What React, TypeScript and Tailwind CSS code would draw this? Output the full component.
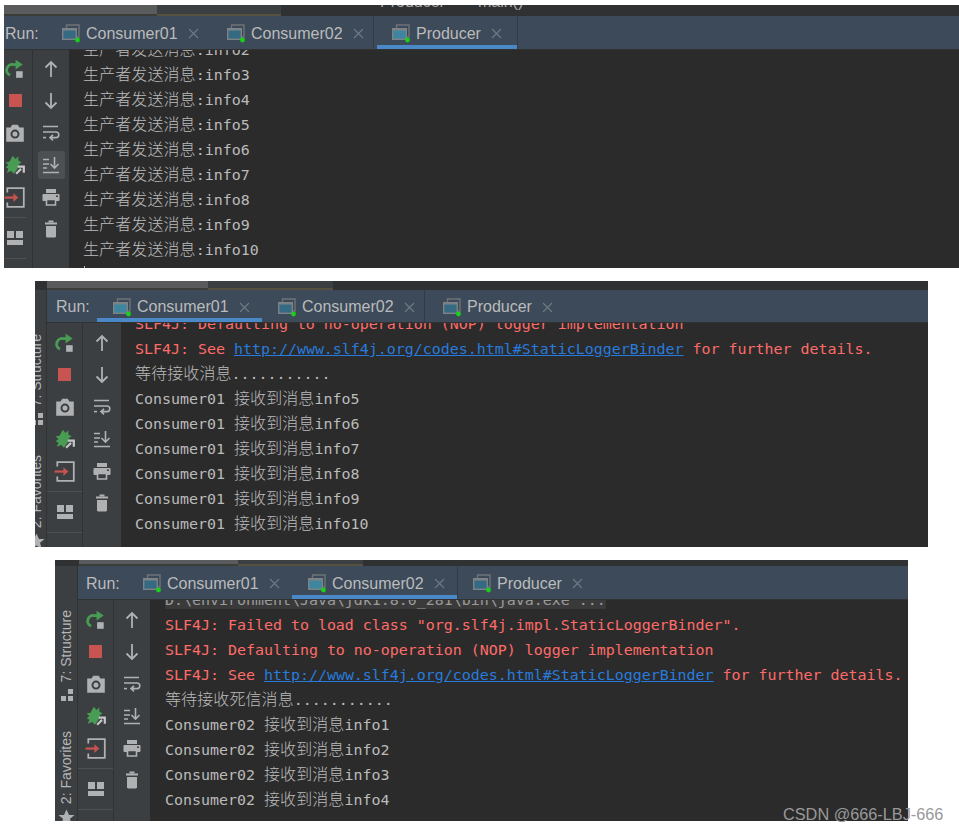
import type { ReactNode } from "react"

const grey = "#afb1b3"

function RerunIcon() {
  return (
    <svg width="22" height="22" viewBox="0 0 20 20">
      <path d="M11 6H8.5A5 5 0 0 0 5.5 15.5" fill="none" stroke="#499c54" strokeWidth="2.6" />
      <path d="M10.5 1.5L17 6L10.5 10.5Z" fill="#499c54" />
      <rect x="11" y="12" width="6" height="6" fill={grey} />
    </svg>
  )
}

function StopIcon() {
  return <div className="h-[13px] w-[13px] bg-[#c75450]" />
}

function CameraIcon() {
  return (
    <svg width="22" height="22" viewBox="0 0 20 20">
      <path d="M2 5H6L7.5 2.5H12.5L14 5H18V18H2Z" fill={grey} />
      <circle cx="10" cy="11" r="3.2" fill="none" stroke="#3c3f41" strokeWidth="1.8" />
    </svg>
  )
}

function BugIcon() {
  return (
    <svg width="22" height="22" viewBox="0 0 20 20">
      <path d="M8 1.5L10.5 4.5L13 2V6L16 7.5L13 9.5L14 11L9 18L6.5 15.5L2.5 17L4 13.5L1.5 12L4 10L1.5 7.5L5 7Z" fill="#499c54" />
      <path d="M11 18L15.5 13.5M12.5 11.5H18V17" fill="none" stroke="#c4c6c8" strokeWidth="2" />
    </svg>
  )
}

function ExitIcon() {
  return (
    <svg width="22" height="22" viewBox="0 0 20 20">
      <path d="M3 6V2H18V19H3V15" fill="none" stroke={grey} strokeWidth="1.6" />
      <path d="M0.5 10.5H10" stroke="#c75450" strokeWidth="2" />
      <path d="M8.5 6.5L13 10.5L8.5 14.5Z" fill="#c75450" />
    </svg>
  )
}

function LayoutIcon() {
  return (
    <svg width="20" height="20" viewBox="0 0 20 20">
      <rect x="2" y="3" width="7" height="7" fill={grey} />
      <rect x="11" y="3" width="7" height="7" fill={grey} />
      <rect x="2" y="12" width="16" height="5" fill={grey} />
    </svg>
  )
}

function UpIcon() {
  return (
    <svg width="20" height="20" viewBox="0 0 20 20" fill="none" stroke={grey} strokeWidth="1.8">
      <path d="M10 18V3M4.5 8.5L10 3L15.5 8.5" />
    </svg>
  )
}

function DownIcon() {
  return (
    <svg width="20" height="20" viewBox="0 0 20 20" fill="none" stroke={grey} strokeWidth="1.8">
      <path d="M10 2V17M4.5 11.5L10 17L15.5 11.5" />
    </svg>
  )
}

function WrapIcon() {
  return (
    <svg width="20" height="20" viewBox="0 0 20 20" fill="none" stroke={grey} strokeWidth="1.6">
      <path d="M2 3.5H17M2 9H15A2.8 2.8 0 0 1 15 14.6H9.5M12 11.8L9 14.6L12 17.4" />
      <path d="M2 14.6H5" />
    </svg>
  )
}

function ScrollIcon() {
  return (
    <svg width="20" height="20" viewBox="0 0 20 20" fill="none" stroke={grey} strokeWidth="1.6">
      <path d="M2 4.5H8M2 9H8M2 13H6M2 17.5H18M13.5 2V13M9.5 9L13.5 13L17.5 9" />
    </svg>
  )
}

function PrintIcon() {
  return (
    <svg width="20" height="20" viewBox="0 0 20 20">
      <rect x="5" y="2" width="10" height="4" fill={grey} />
      <rect x="1.5" y="7" width="17" height="7" rx="1" fill={grey} />
      <path d="M5.5 12.5H14.5V18H5.5Z" fill="#3c3f41" stroke={grey} strokeWidth="1.6" />
      <rect x="15" y="8.5" width="2" height="1.5" fill="#3c3f41" />
    </svg>
  )
}

function TrashIcon() {
  return (
    <svg width="20" height="20" viewBox="0 0 20 20">
      <rect x="7.5" y="1.5" width="5" height="2" fill={grey} />
      <rect x="4" y="3.5" width="12" height="2" fill={grey} />
      <path d="M5 7H15V17.5L14 18.5H6L5 17.5Z" fill={grey} />
    </svg>
  )
}

function TabIcon({ active }: { active?: boolean }) {
  return (
    <svg width="18" height="19" viewBox="0 0 18 19" className="shrink-0">
      <path d="M4.5 4V1H17V13H14" fill="none" stroke="#6e7377" strokeWidth="1.4" />
      <rect x="0.7" y="4.7" width="13.6" height="10.6" fill={active ? "#3e86a0" : "#346a82"} stroke="#7d8286" strokeWidth="1.4" />
      <rect x="0" y="4" width="15" height="2.5" fill="#7d8286" />
      <circle cx="15.5" cy="16" r="2.4" fill="#18d118" />
    </svg>
  )
}

function Tab({
  name,
  width,
  active,
  line,
  className = "pl-[16px]",
}: {
  name: string
  width: string
  active?: boolean
  line?: string
  className?: string
}) {
  return (
    <div className={`relative flex h-full shrink-0 items-center pt-[2px] ${width} ${className}`}>
      <TabIcon active={active} />
      <span className="ml-[6px] text-[16px] text-[#bbbbbb]">{name}</span>
      <svg width="11" height="11" viewBox="0 0 11 11" className="ml-[10px]" stroke="#6f7a84" strokeWidth="1.1">
        <path d="M1 1L10 10M10 1L1 10" />
      </svg>
      {line && <div className={`absolute right-0 bottom-0 h-[4px] bg-[#4a88c7] ${line}`} />}
    </div>
  )
}

function Slot({ children, className = "h-[32px]" }: { children: ReactNode; className?: string }) {
  return <div className={`flex w-full items-center justify-center ${className}`}>{children}</div>
}

function Line({ children, className = "" }: { children: ReactNode; className?: string }) {
  return <div className={`h-[25px] whitespace-pre leading-[25px] ${className}`}>{children}</div>
}

function Cjk({ children }: { children: ReactNode }) {
  return <span className="font-['Noto_Sans_CJK_SC'] text-[16px] leading-none font-light tracking-[0.1px]">{children}</span>
}

function Link({ children }: { children: ReactNode }) {
  return <span className="text-[#287bde] underline">{children}</span>
}

function TopStrip({ lead, a, b, title }: { lead: string; a: string; b: string; title?: boolean }) {
  return (
    <div className="flex h-full overflow-hidden bg-[#2f3133]">
      <div className={`h-full shrink-0 ${lead}`} />
      <div className={`h-full shrink-0 border-b-2 border-[#3c3c38] bg-[#5a5b5c] ${a}`} />
      <div className={`h-full shrink-0 border-b-2 border-[#56503f] bg-[#3c3f41] ${b}`} />
      {title && (
        <div className="-mt-[15px] ml-[99px] text-[16px] text-[#a9a9a9]">
          Producer<span className="ml-[33px]">main()</span>
        </div>
      )}
    </div>
  )
}

function StripText({ children }: { children: ReactNode }) {
  return (
    <div className="rotate-180 whitespace-nowrap text-[14px] leading-[23px] text-[#b4b6b8] [writing-mode:vertical-rl]">
      {children}
    </div>
  )
}

function SideStrip({ className, shift }: { className: string; shift: string }) {
  return (
    <div className={`shrink-0 overflow-hidden border-r border-[#323232] bg-[#3c3f41] ${className}`}>
      <div className={`flex h-full w-[23px] flex-col items-center pt-[44px] ${shift}`}>
        <StripText>7: Structure</StripText>
        <svg width="12" height="12" viewBox="0 0 12 12" className="mt-[7px] shrink-0" fill={grey}>
          <rect x="7" y="0" width="5" height="5" />
          <rect x="0" y="7" width="5" height="5" />
          <rect x="7" y="7" width="5" height="5" />
        </svg>
        <div className="mt-[30px]">
          <StripText>2: Favorites</StripText>
        </div>
        <svg width="17" height="17" viewBox="0 0 17 17" className="mt-[4px] shrink-0" fill={grey}>
          <path d="M8.5 0.5L11 6H16.5L12 9.8L13.7 16L8.5 12.5L3.3 16L5 9.8L0.5 6H6Z" />
        </svg>
      </div>
    </div>
  )
}

function Tools({ col1, col2, scrollOn, top = "pt-[4px]" }: { col1: string; col2: string; scrollOn?: boolean; top?: string }) {
  return (
    <>
      <div className={`shrink-0 border-r border-[#323232] bg-[#3c3f41] ${top} ${col1}`}>
        <Slot className="h-[31px]">
          <RerunIcon />
        </Slot>
        <Slot className="h-[33px]">
          <StopIcon />
        </Slot>
        <Slot>
          <CameraIcon />
        </Slot>
        <Slot>
          <BugIcon />
        </Slot>
        <Slot>
          <ExitIcon />
        </Slot>
        <div className="mt-[4px] h-px w-full bg-[#515151]" />
        <Slot className="mt-[4px] h-[32px]">
          <LayoutIcon />
        </Slot>
        <div className="mt-[4px] h-px w-full bg-[#515151]" />
      </div>
      <div className={`shrink-0 bg-[#3c3f41] ${top} ${col2}`}>
        <Slot className="h-[31px]">
          <UpIcon />
        </Slot>
        <Slot className="h-[33px]">
          <DownIcon />
        </Slot>
        <Slot>
          <WrapIcon />
        </Slot>
        <Slot>
          <div className={`flex h-[28px] w-[27px] items-center justify-center rounded-[3px] ${scrollOn ? "bg-[#4c5052]" : ""}`}>
            <ScrollIcon />
          </div>
        </Slot>
        <Slot>
          <PrintIcon />
        </Slot>
        <Slot>
          <TrashIcon />
        </Slot>
      </div>
    </>
  )
}

function Output({ children, className, top }: { children: ReactNode; className: string; top: string }) {
  return (
    <div className={`min-w-0 flex-1 overflow-hidden bg-[#2b2b2b] font-['DejaVu_Sans_Mono'] text-[14.95px] text-[#bbbbbb] ${className}`}>
      <div className={top}>{children}</div>
    </div>
  )
}

export default function App() {
  return (
    <div className="relative h-[830px] w-[959px] overflow-hidden bg-white pt-[5px] font-['Liberation_Sans',sans-serif]">
      {/* Producer */}
      <div className="ml-[4px] flex h-[263px] w-[955px] flex-col overflow-hidden">
        <div className="h-[11px] shrink-0">
          <TopStrip lead="w-0" a="w-[153px]" b="w-[124px]" title />
        </div>
        <div className="flex h-[34px] shrink-0 items-center border-b border-[#323232] bg-[#3c4a59]">
          <span className="w-[42px] shrink-0 pt-[2px] pl-[1px] text-[16px] text-[#bbbbbb]">Run:</span>
          <Tab name="Consumer01" width="w-[165px]" />
          <Tab name="Consumer02" width="w-[162px]" />
          <Tab name="Producer" width="w-[145px]" className="border-x border-[#323a43] pl-[18px]" active line="left-[3px]" />
        </div>
        <div className="flex min-h-0 flex-1">
          <Tools col1="w-[29px] pr-[6px]" col2="w-[36px]" top="pt-[3px]" scrollOn />
          <Output className="pl-[14px]" top="-mt-[12px]">
            <Line><Cjk>生产者发送消息</Cjk>:info2</Line>
            <Line><Cjk>生产者发送消息</Cjk>:info3</Line>
            <Line><Cjk>生产者发送消息</Cjk>:info4</Line>
            <Line><Cjk>生产者发送消息</Cjk>:info5</Line>
            <Line><Cjk>生产者发送消息</Cjk>:info6</Line>
            <Line><Cjk>生产者发送消息</Cjk>:info7</Line>
            <Line><Cjk>生产者发送消息</Cjk>:info8</Line>
            <Line><Cjk>生产者发送消息</Cjk>:info9</Line>
            <Line><Cjk>生产者发送消息</Cjk>:info10</Line>
            <div className="mt-[3px] ml-[1px] h-[6px] w-px bg-[#bbbbbb]" />
          </Output>
        </div>
      </div>

      {/* Consumer01 */}
      <div className="mt-[13px] ml-[35px] flex h-[266px] w-[893px] flex-col overflow-hidden">
        <div className="h-[9px] shrink-0">
          <TopStrip lead="w-[12px]" a="w-[161px]" b="w-[125px]" />
        </div>
        <div className="flex min-h-0 flex-1">
          <SideStrip className="w-[12px]" shift="-ml-[10px]" />
          <div className="flex min-w-0 flex-1 flex-col">
            <div className="flex h-[33px] shrink-0 items-center border-b border-[#323232] bg-[#3c4a59]">
              <span className="w-[50px] shrink-0 pt-[2px] pl-[9px] text-[16px] text-[#bbbbbb]">Run:</span>
              <Tab name="Consumer01" width="w-[165px]" active line="left-0" />
              <Tab name="Consumer02" width="w-[162px]" />
              <Tab name="Producer" width="w-[142px]" className="border-l border-[#323a43] pl-[18px]" />
            </div>
            <div className="flex min-h-0 flex-1">
              <Tools col1="w-[36px]" col2="w-[38px]" />
              <Output className="pl-[14px]" top="-mt-[11px]">
                <Line className="text-[#ff6b68]">SLF4J: Defaulting to no-operation (NOP) logger implementation</Line>
                <Line className="text-[#ff6b68]">
                  SLF4J: See <Link>http://www.slf4j.org/codes.html#StaticLoggerBinder</Link> for further details.
                </Line>
                <Line><Cjk>等待接收消息</Cjk>...........</Line>
                <Line>Consumer01 <Cjk>接收到消息</Cjk>info5</Line>
                <Line>Consumer01 <Cjk>接收到消息</Cjk>info6</Line>
                <Line>Consumer01 <Cjk>接收到消息</Cjk>info7</Line>
                <Line>Consumer01 <Cjk>接收到消息</Cjk>info8</Line>
                <Line>Consumer01 <Cjk>接收到消息</Cjk>info9</Line>
                <Line>Consumer01 <Cjk>接收到消息</Cjk>info10</Line>
              </Output>
            </div>
          </div>
        </div>
      </div>

      {/* Consumer02 */}
      <div className="mt-[13px] ml-[55px] flex h-[261px] w-[853px] flex-col overflow-hidden">
        <div className="h-[6px] shrink-0">
          <TopStrip lead="w-[24px]" a="w-[159px]" b="w-[125px]" />
        </div>
        <div className="flex min-h-0 flex-1">
          <SideStrip className="w-[23px]" shift="" />
          <div className="flex min-w-0 flex-1 flex-col">
            <div className="flex h-[34px] shrink-0 items-center border-b border-[#323232] bg-[#3c4a59]">
              <span className="w-[49px] shrink-0 pt-[2px] pl-[8px] text-[16px] text-[#bbbbbb]">Run:</span>
              <Tab name="Consumer01" width="w-[165px]" />
              <Tab name="Consumer02" width="w-[165px]" active line="left-0" />
              <Tab name="Producer" width="w-[142px]" className="border-l border-[#323a43] pl-[15px]" />
            </div>
            <div className="flex min-h-0 flex-1">
              <Tools col1="w-[36px]" col2="w-[36px]" />
              <Output className="pl-[15px]" top="-mt-[12px]">
                <Line>
                  <span className="bg-[#3a3a3a] text-[#9a9a9a]">D:\environment\Java\jdk1.8.0_281\bin\java.exe ...</span>
                </Line>
                <Line className="text-[#ff6b68]">SLF4J: Failed to load class "org.slf4j.impl.StaticLoggerBinder".</Line>
                <Line className="text-[#ff6b68]">SLF4J: Defaulting to no-operation (NOP) logger implementation</Line>
                <Line className="text-[#ff6b68]">
                  SLF4J: See <Link>http://www.slf4j.org/codes.html#StaticLoggerBinder</Link> for further details.
                </Line>
                <Line><Cjk>等待接收死信消息</Cjk>...........</Line>
                <Line>Consumer02 <Cjk>接收到消息</Cjk>info1</Line>
                <Line>Consumer02 <Cjk>接收到消息</Cjk>info2</Line>
                <Line>Consumer02 <Cjk>接收到消息</Cjk>info3</Line>
                <Line>Consumer02 <Cjk>接收到消息</Cjk>info4</Line>
              </Output>
            </div>
          </div>
        </div>
      </div>

      <div className="absolute top-[804px] left-[783px] text-[16.3px] leading-[20px] text-[#999999]">CSDN @666-LBJ-666</div>
    </div>
  )
}
